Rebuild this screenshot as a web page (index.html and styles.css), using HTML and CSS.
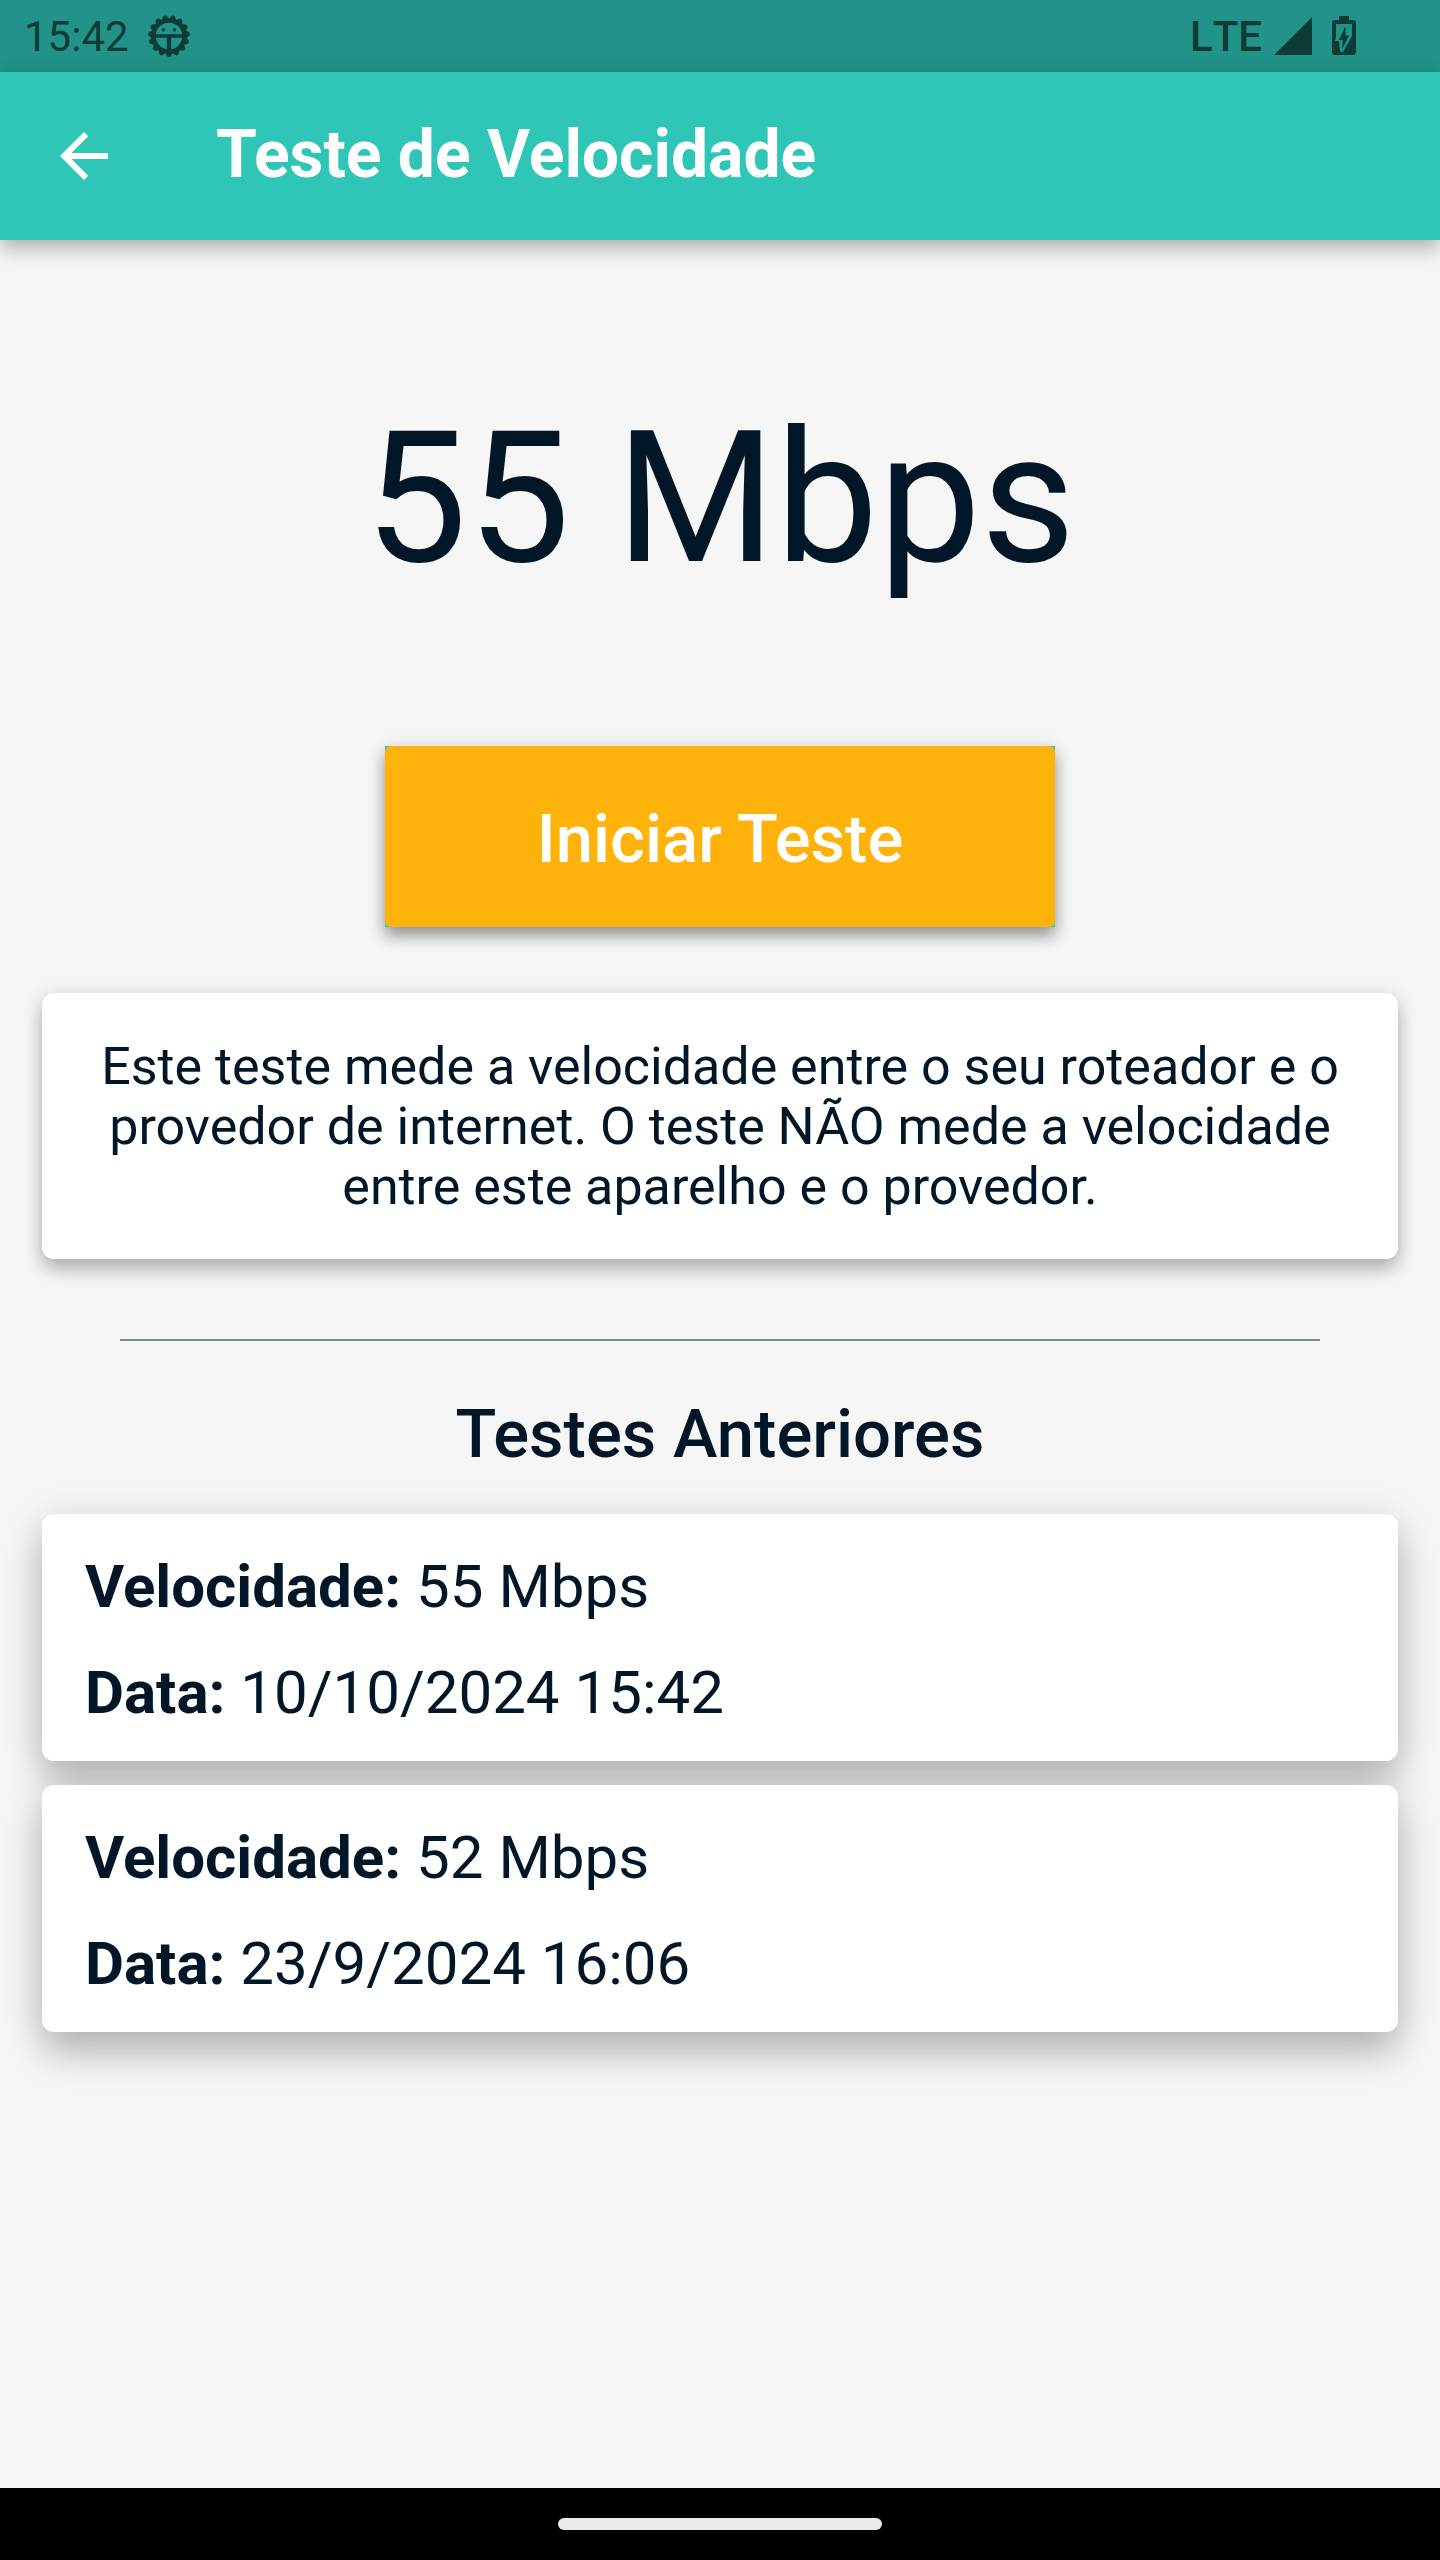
FILE: index.html
```html
<!DOCTYPE html>
<html lang="pt-BR">
<head>
<meta charset="utf-8">
<meta name="viewport" content="width=device-width, initial-scale=1">
<title>Teste de Velocidade</title>
<link rel="stylesheet" href="styles.css">
</head>
<body>
<div class="status-bar">
  <span class="status-time">15:42</span>
  <svg class="status-gear" width="42" height="42" viewBox="-21 -21 42 42" fill="currentColor" aria-hidden="true">
    <defs><path id="tooth" d="M-4.2-16.5-1.6-20.4Q0-21.6 1.6-20.4L4.2-16.5z"/></defs>
    <use href="#tooth" transform="rotate(12)"/><use href="#tooth" transform="rotate(36)"/><use href="#tooth" transform="rotate(60)"/>
    <use href="#tooth" transform="rotate(84)"/><use href="#tooth" transform="rotate(108)"/><use href="#tooth" transform="rotate(132)"/>
    <use href="#tooth" transform="rotate(156)"/><use href="#tooth" transform="rotate(180)"/><use href="#tooth" transform="rotate(204)"/>
    <use href="#tooth" transform="rotate(228)"/><use href="#tooth" transform="rotate(252)"/><use href="#tooth" transform="rotate(276)"/>
    <use href="#tooth" transform="rotate(300)"/><use href="#tooth" transform="rotate(324)"/><use href="#tooth" transform="rotate(348)"/>
    <circle r="15.3" fill="none" stroke="currentColor" stroke-width="4"/>
    <path d="M-14-1.7h28v3.4H2.2V14h-4.4V1.7H-14z"/>
    <circle cx="-5.6" cy="-6.2" r="1.7"/><circle cx="5.6" cy="-6.2" r="1.7"/>
  </svg>
  <span class="status-network">LTE</span>
  <svg width="38" height="38" viewBox="0 0 38 38" fill="currentColor" aria-hidden="true"><path d="M0 38 38 0v38z"/></svg>
  <svg class="status-battery" width="24" height="40" viewBox="0 0 24 40" aria-hidden="true">
    <path fill="currentColor" fill-rule="evenodd" d="M7 0h10v4h4q3 0 3 3v29q0 3-3 3H3q-3 0-3-3V7q0-3 3-3h4zM4 8v13l-1 4h4l1 10q1 2 3 1l9-16V8z"/>
    <path fill="currentColor" d="M13.500 10v9.500H17L10.500 33V24H7z"/>
  </svg>
</div>
<header class="app-bar">
  <button class="back" type="button" aria-label="Voltar">
    <svg width="48" height="48" viewBox="4 4 16 16" fill="currentColor" aria-hidden="true"><path d="M20 11H7.830l5.590-5.590L12 4l-8 8 8 8 1.410-1.410L7.830 13H20v-2z"/></svg>
  </button>
  <h1 class="title">Teste de Velocidade</h1>
</header>
<main class="content">
  <p class="speed">55 Mbps</p>
  <button class="start" type="button"><span class="start-label">Iniciar Teste</span></button>
  <p class="info">Este teste mede a velocidade entre o seu roteador e o provedor de internet. O teste NÃO mede a velocidade entre este aparelho e o provedor.</p>
  <hr class="divider">
  <h2 class="subtitle">Testes Anteriores</h2>
  <ul class="history">
    <li class="result"><p><strong>Velocidade:</strong> 55 Mbps</p><p><strong>Data:</strong> 10/10/2024 15:42</p></li>
    <li class="result"><p><strong>Velocidade:</strong> 52 Mbps</p><p><strong>Data:</strong> 23/9/2024 16:06</p></li>
  </ul>
</main>
<div class="nav-bar"><div class="nav-handle"></div></div>
</body>
</html>
```
FILE: styles.css
```css
* { box-sizing: border-box; }

body {
  margin: 0;
  min-height: 100vh;
  display: flex;
  flex-direction: column;
  background: #f6f6f6;
  color: #011627;
  font-family: Roboto, sans-serif;
}

h1, h2, p, ul { margin: 0; padding: 0; }

button {
  border: 0;
  color: #fff;
  font-family: inherit;
  cursor: pointer;
}

svg { display: block; }

.status-bar {
  display: flex;
  align-items: center;
  height: 72px;
  padding: 0 84px 0 24px;
  background: #229388;
  color: #0f3b36;
  font-size: 42px;
  line-height: 72px;
}
.status-time,
.status-network {
  padding-top: 2px;
  font-kerning: none;
}
.status-gear { margin-left: 19px; }
.status-network {
  margin-left: auto;
  margin-right: 12px;
  font-weight: 500;
}
.status-battery { margin-left: 20px; }

.app-bar {
  position: relative;
  display: flex;
  align-items: center;
  height: 168px;
  padding: 0 48px;
  background: #2fc5b7;
  color: #fff;
  box-shadow: 0 12px 18px rgba(0, 0, 0, .17), 0 3px 18px rgba(0, 0, 0, .14);
}
.back {
  padding: 12px;
  background: none;
}
.title {
  padding: 0 0 2px 96px;
  font-size: 66px;
  font-weight: 700;
  line-height: 80px;
}

.content {
  flex: 1;
  display: flex;
  flex-direction: column;
  padding: 151px 42px 60px;
}
.speed {
  font-size: 183px;
  line-height: 216px;
  text-align: center;
}
.start {
  align-self: center;
  display: flex;
  width: 670px;
  max-width: 100%;
  height: 181px;
  margin: 139px 0 66px;
  padding: 0;
  background: #2fc5b7;
  font-size: 67px;
  font-weight: 500;
  box-shadow: 0 10px 14px rgba(0, 0, 0, .3), 0 3px 18px rgba(0, 0, 0, .16);
}
.start-label {
  flex: 1;
  align-self: stretch;
  padding-top: 5px;
  border-radius: 6px;
  background: #ffb20a;
  line-height: 176px;
}
.info {
  padding: 44px 36px 42px;
  border-radius: 12px;
  background: #fff;
  font-size: 52px;
  line-height: 60px;
  text-align: center;
  box-shadow: 0 12px 18px rgba(0, 0, 0, .2), 0 3px 20px rgba(0, 0, 0, .14);
}
.divider {
  align-self: stretch;
  height: 2px;
  margin: 80px 78px 53px;
  border: 0;
  background: #7b8890;
}
.subtitle {
  margin-bottom: 40px;
  font-size: 67px;
  font-weight: 500;
  line-height: 80px;
  text-align: center;
}
.history {
  display: flex;
  flex-direction: column;
  gap: 24px;
  list-style: none;
}
.result {
  display: flex;
  flex-direction: column;
  gap: 36px;
  padding: 38px 43px 33px;
  border-radius: 12px;
  background: #fff;
  font-size: 60px;
  line-height: 70px;
  box-shadow: 0 24px 36px rgba(0, 0, 0, .18), 0 6px 42px rgba(0, 0, 0, .14);
}

.nav-bar {
  display: flex;
  align-items: center;
  justify-content: center;
  height: 72px;
  background: #000;
}
.nav-handle {
  width: 324px;
  height: 12px;
  border-radius: 6px;
  background: #ebebeb;
}
```
